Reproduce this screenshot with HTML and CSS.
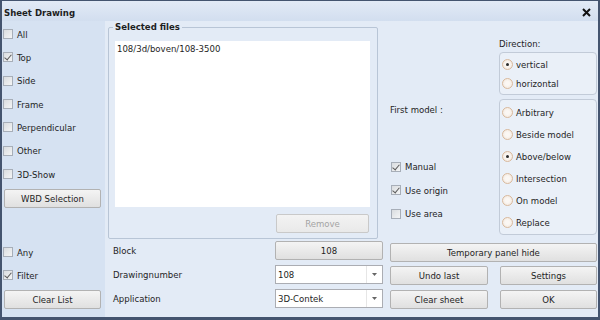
FILE: index.html
```html
<!DOCTYPE html>
<html>
<head>
<meta charset="utf-8">
<link rel="stylesheet" href="styles.css">
</head>
<body>
<div class="window">
  <div class="titlebar">
    <span class="title">Sheet Drawing</span>
    <svg class="close" width="9" height="9" viewBox="0 0 9 9"><path d="M1 1L8 8M8 1L1 8" stroke="#111" stroke-width="2"/></svg>
  </div>
  <div class="body">
    <div class="left">
      <div class="checks">
        <label class="row"><span class="cb"></span>All</label>
        <label class="row"><span class="cb on"></span>Top</label>
        <label class="row"><span class="cb"></span>Side</label>
        <label class="row"><span class="cb"></span>Frame</label>
        <label class="row"><span class="cb"></span>Perpendicular</label>
        <label class="row"><span class="cb"></span>Other</label>
        <label class="row"><span class="cb"></span>3D-Show</label>
      </div>
      <div class="btn wbd">WBD Selection</div>
      <div class="bottom">
        <label class="row r23"><span class="cb"></span>Any</label>
        <label class="row r23"><span class="cb on"></span>Filter</label>
        <div class="btn clear">Clear List</div>
      </div>
    </div>
    <div class="center">
      <fieldset class="group">
        <legend>Selected files</legend>
        <div class="listbox">108/3d/boven/108-3500</div>
        <div class="btn disabled remove">Remove</div>
      </fieldset>
      <div class="frow"><span class="flabel">Block</span><div class="btn ctl">108</div></div>
      <div class="frow"><span class="flabel">Drawingnumber</span><div class="select ctl"><span class="val">108</span><span class="arrow"><svg width="5" height="3" viewBox="0 0 5 3"><path d="M0 0H5L2.5 3Z" fill="#666"/></svg></span></div></div>
      <div class="frow"><span class="flabel">Application</span><div class="select ctl"><span class="val">3D-Contek</span><span class="arrow"><svg width="5" height="3" viewBox="0 0 5 3"><path d="M0 0H5L2.5 3Z" fill="#666"/></svg></span></div></div>
    </div>
    <div class="right">
      <div class="dirwrap">
        <div class="dirlabel">Direction:</div>
        <div class="box dir">
          <label class="rrow h19"><span class="rb on"></span>vertical</label>
          <label class="rrow h19"><span class="rb"></span>horizontal</label>
        </div>
      </div>
      <div class="fm">
        <div class="fmleft">
          <div class="fmlabel">First model :</div>
          <div class="opts">
            <label class="row r235 ind"><span class="cb on"></span>Manual</label>
            <label class="row r235 ind"><span class="cb on"></span>Use origin</label>
            <label class="row r235 ind"><span class="cb"></span>Use area</label>
          </div>
        </div>
        <div class="box model">
          <label class="rrow h22"><span class="rb"></span>Arbitrary</label>
          <label class="rrow h22"><span class="rb"></span>Beside model</label>
          <label class="rrow h22"><span class="rb on"></span>Above/below</label>
          <label class="rrow h22"><span class="rb"></span>Intersection</label>
          <label class="rrow h22"><span class="rb"></span>On model</label>
          <label class="rrow h22"><span class="rb"></span>Replace</label>
        </div>
      </div>
      <div class="btn tph">Temporary panel hide</div>
      <div class="bgrid g1">
        <div class="btn">Undo last</div>
        <div class="btn">Settings</div>
      </div>
      <div class="bgrid g2">
        <div class="btn">Clear sheet</div>
        <div class="btn">OK</div>
      </div>
    </div>
  </div>
</div>
</body>
</html>
```

FILE: styles.css
```css
* { box-sizing: border-box; }
html, body { margin: 0; padding: 0; }
body {
  width: 600px; height: 320px; overflow: hidden;
  font-family: "DejaVu Sans Condensed", "DejaVu Sans", sans-serif;
  font-size: 9.5px; color: #1e1e1e;
}
.window {
  width: 600px; height: 320px;
  border-style: solid; border-color: #44546f;
  border-width: 1px 2px 3px 2px;
  display: flex; flex-direction: column;
  background: #e3ebf6;
}
.titlebar {
  height: 20px; flex: none;
  display: flex; align-items: center; justify-content: space-between;
  padding: 2px 7px 0 2px;
  background: linear-gradient(#e2eaf6, #d2deef);
}
.title { font-weight: bold; font-size: 9.5px; }
.close { display: block; }
.body { flex: 1; display: flex; min-height: 0; }

.left {
  width: 103px; flex: none;
  background: #d6e2f2;
  display: flex; flex-direction: column;
  padding: 1.5px 0 8px 1px;
}
.row { display: flex; align-items: center; height: 23.33px; }
.r23 { height: 23px; }
.r235 { height: 23.5px; }
.cb {
  width: 10px; height: 10px; flex: none; margin-right: 4px;
  border: 1px solid #a7aeb8;
  background: linear-gradient(135deg, #d9dcdf, #f4f5f6);
  position: relative;
}
.cb.on::after {
  content: ""; position: absolute; left: 2px; top: 0px;
  width: 3px; height: 6px;
  border: solid #5a5a5a; border-width: 0 1.5px 1.5px 0;
  transform: rotate(40deg);
}
.btn {
  height: 19px;
  display: flex; align-items: center; justify-content: center;
  border: 1px solid #b2b2b2; border-radius: 2px;
  background: linear-gradient(#f4f4f4, #e0e0e0);
  color: #1e1e1e;
}
.wbd { width: 97px; margin: 3.33px 0 0 1px; }
.bottom { margin-top: auto; }
.clear { width: 97px; margin: 3.5px 0 0 1px; }
.btn.disabled {
  color: #a4a4a4; border-color: #c9c9c9;
  background: linear-gradient(#f3f3f3, #e9e9e9);
}

.center {
  width: 280px; flex: none;
  display: flex; flex-direction: column;
  padding: 0 2px 0 3px;
}
.group {
  margin: 0; width: 270px;
  border: 1px solid #b8c5d6; border-radius: 2px;
  padding: 8px 7px 5px 4px;
  display: flex; flex-direction: column;
}
.group legend {
  font-weight: bold; line-height: 12px; padding: 0 2px;
}
.listbox {
  margin-left: 2px; height: 166px;
  background: #fff;
  padding: 1px 2px;
  line-height: 14px;
}
.remove { width: 93px; align-self: flex-end; margin: 7px 1px 0 0; }
.frow {
  display: flex; align-items: center;
  height: 19px; margin-top: 5px; padding-left: 5px;
}
.group + .frow { margin-top: 2px; }
.flabel { flex: 1; }
.ctl { width: 108px; flex: none; }
.select {
  height: 19px; background: #fff;
  border: 1px solid #abadb3;
  display: flex; align-items: center;
}
.select .val { flex: 1; padding-left: 2px; }
.select .arrow {
  width: 16px; height: 100%;
  border-left: 1px solid #e6e6e6;
  display: flex; align-items: center; justify-content: center;
}
.select .arrow svg { display: block; }

.right {
  flex: 1;
  display: flex; flex-direction: column;
  padding: 16px 1px 0 5px;
}
.dirwrap { align-self: flex-end; width: 98px; }
.dirlabel { line-height: 14px; margin-bottom: 1px; }
.box {
  border: 1px solid #c2cbd8; border-radius: 4px;
  background: #eaf0f8;
  padding: 2px 2px;
}
.dir { padding: 2px 2px 1px; }
.rrow { display: flex; align-items: center; }
.h19 { height: 19px; }
.h22 { height: 22px; }
.rb {
  width: 11px; height: 11px; flex: none; border-radius: 50%;
  border: 1px solid #d9b99c;
  background: radial-gradient(circle at 50% 50%, #fbf7f3 30%, #efe4d9 100%);
  margin-right: 3px; position: relative;
}
.rb.on::after {
  content: ""; position: absolute; left: 3px; top: 3px;
  width: 3px; height: 3px; border-radius: 50%; background: #2a2a2a;
}
.fm { display: flex; margin-top: 4px; }
.fmleft { flex: 1; }
.fmlabel { line-height: 14px; margin-top: 4px; }
.opts { margin-top: 38px; }
.ind { padding-left: 1px; }
.model { width: 98px; padding: 1px 2px; height: 136px; }
.tph { margin-top: 8px; }
.bgrid { display: grid; grid-template-columns: 98px 1fr; column-gap: 12px; }
.g1 { margin-top: 4px; }
.g2 { margin-top: 5px; }
```
